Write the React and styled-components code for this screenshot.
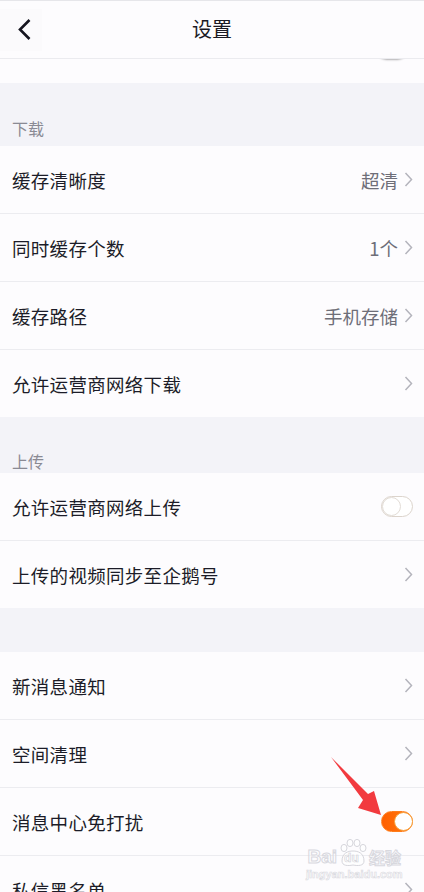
import React from "react";
import styled, { createGlobalStyle } from "styled-components";

const GlobalStyle = createGlobalStyle`
  html, body {
    margin: 0;
    padding: 0;
    background: #f3f3f8;
  }
  * {
    box-sizing: border-box;
  }
`;

const sections = [
  {
    title: "下载",
    height: 63,
    pad: 8,
    rows: [
      { label: "缓存清晰度", value: "超清", kind: "link" },
      { label: "同时缓存个数", value: "1个", kind: "link" },
      { label: "缓存路径", value: "手机存储", kind: "link" },
      { label: "允许运营商网络下载", kind: "link" },
    ],
  },
  {
    title: "上传",
    height: 56,
    pad: 2,
    rows: [
      { label: "允许运营商网络上传", kind: "off" },
      { label: "上传的视频同步至企鹅号", kind: "link" },
    ],
  },
  {
    title: "",
    height: 44,
    pad: 0,
    rows: [
      { label: "新消息通知", kind: "link" },
      { label: "空间清理", kind: "link" },
      { label: "消息中心免打扰", kind: "on" },
      { label: "私信黑名单", kind: "link" },
    ],
  },
];

const Chevron = () => (
  <svg width="9" height="15" viewBox="0 0 9 15">
    <polyline
      points="1.5,1 7.5,7.5 1.5,14"
      fill="none"
      stroke="#b4b4bc"
      strokeWidth="1.5"
    />
  </svg>
);

const App = () => {
  return (
    <>
      <GlobalStyle />
      <Page>
        <Header>
          <BackButton>
            <svg width="16" height="23" viewBox="0 0 16 23">
              <polyline
                points="12.5,2 3,11.5 12.5,21"
                fill="none"
                stroke="#15151f"
                strokeWidth="2.6"
              />
            </svg>
          </BackButton>
          <Title>设置</Title>
        </Header>

        <Strip>
          <Switch $on={false} $clipped />
        </Strip>

        {sections.map((section) => (
          <React.Fragment key={section.title + section.height}>
            <SectionHead $height={section.height} $pad={section.pad}>
              {section.title}
            </SectionHead>
            <Group>
              {section.rows.map((row) => (
                <Row key={row.label}>
                  <Label>{row.label}</Label>
                  <Right>
                    {row.value && <Value>{row.value}</Value>}
                    {row.kind === "link" && <Chevron />}
                    {row.kind === "off" && <Switch $on={false} />}
                    {row.kind === "on" && <Switch $on />}
                  </Right>
                </Row>
              ))}
            </Group>
          </React.Fragment>
        ))}

        <Pointer width="60" height="64" viewBox="0 0 60 64">
          <polygon
            points="3,2 40,39 46,36 53,60 30,53 35,45"
            fill="#f23a3f"
          />
        </Pointer>

        <Watermark>
          <MarkLine>
            <MarkWord>Bai</MarkWord>
            <Paw>
              <svg width="30" height="28" viewBox="0 0 30 28">
                <g fill="rgba(255,255,255,0.5)" stroke="#d6d6dc" strokeWidth="1">
                  <ellipse cx="6" cy="9" rx="3" ry="3.6" />
                  <ellipse cx="12" cy="4" rx="3" ry="3.6" />
                  <ellipse cx="19" cy="4" rx="3" ry="3.6" />
                  <ellipse cx="25" cy="9" rx="3" ry="3.6" />
                  <path d="M4,22 C4,14 10,12 15,12 C20,12 26,14 26,22 C26,27 20,27 15,26 C10,27 4,27 4,22 Z" />
                </g>
              </svg>
              <PawText>du</PawText>
            </Paw>
            <MarkWord $cjk>经验</MarkWord>
          </MarkLine>
          <MarkUrl>jingyan.baidu.com</MarkUrl>
        </Watermark>
      </Page>
    </>
  );
};

const Page = styled.div`
  position: relative;
  width: 424px;
  height: 892px;
  overflow: hidden;
  background: #f3f3f8;
  font-family: "Noto Sans CJK SC", "Noto Sans", sans-serif;
  border-top: 1px solid #e6e6ea;
`;

const Header = styled.div`
  position: relative;
  height: 58px;
  display: flex;
  align-items: center;
  justify-content: center;
  padding-bottom: 3px;
  background: #fdfcfe;
  border-bottom: 1px solid #ebebef;
  z-index: 2;
`;

const BackButton = styled.div`
  position: absolute;
  left: 0;
  top: 8px;
  width: 42px;
  height: 42px;
  display: flex;
  align-items: center;
  padding-left: 17px;
  padding-bottom: 2px;
  background: #fbfafc;
`;

const Title = styled.div`
  font-size: 20px;
  color: #1a1a24;
`;

const Strip = styled.div`
  height: 24px;
  background: #fdfcfe;
  display: flex;
  justify-content: flex-end;
  align-items: flex-start;
  padding-right: 16px;
  overflow: hidden;
`;

const SectionHead = styled.div`
  height: ${(p) => p.$height}px;
  display: flex;
  align-items: flex-end;
  padding: 0 12px ${(p) => p.$pad}px;
  font-size: 16px;
  line-height: 20px;
  color: #8a8a94;
`;

const Group = styled.div`
  background: #fdfcfe;
`;

const Row = styled.div`
  position: relative;
  height: 68px;
  display: flex;
  align-items: center;
  justify-content: space-between;
  padding: 0 11px 0 12px;

  & + & {
    border-top: 1px solid #ececf0;
  }
  &:first-child {
    height: 67px;
  }
`;

const Label = styled.div`
  font-size: 18.5px;
  color: #1c1c28;
  letter-spacing: 0.3px;
`;

const Right = styled.div`
  display: flex;
  align-items: center;
  gap: 6px;
`;

const Value = styled.div`
  font-size: 18.5px;
  color: #6e6e78;
`;

const Switch = styled.div`
  position: relative;
  width: 32px;
  height: 21px;
  border-radius: 11px;
  margin-top: ${(p) => (p.$clipped ? "-21px" : "0")};
  background: ${(p) =>
    p.$on ? "linear-gradient(90deg, #ff6000, #ff7a10)" : "#ffffff"};
  border: 1px solid ${(p) => (p.$on ? "#ff7d1a" : "#dcd4cc")};
  box-shadow: ${(p) => (p.$clipped ? "0 1px 2px rgba(0,0,0,0.3)" : "none")};

  &::after {
    content: "";
    position: absolute;
    top: 0;
    left: ${(p) => (p.$on ? "12px" : "0")};
    width: 19px;
    height: 19px;
    border-radius: 50%;
    background: #ffffff;
    border: 1px solid ${(p) => (p.$on ? "#f7a03a" : "#e2dcd6")};
    box-sizing: border-box;
  }
`;

const Pointer = styled.svg`
  position: absolute;
  left: 328px;
  top: 754px;
  z-index: 3;
`;

const Watermark = styled.div`
  position: absolute;
  left: 306px;
  top: 838px;
  display: flex;
  flex-direction: column;
  align-items: center;
  z-index: 3;
  pointer-events: none;
`;

const MarkLine = styled.div`
  display: flex;
  align-items: flex-end;
  gap: 1px;
`;

const MarkWord = styled.span`
  font-family: ${(p) =>
    p.$cjk ? '"Noto Sans CJK SC", sans-serif' : '"Liberation Sans", sans-serif'};
  font-weight: 700;
  font-size: ${(p) => (p.$cjk ? "16px" : "19px")};
  line-height: 20px;
  color: rgba(255, 255, 255, 0.4);
  -webkit-text-stroke: 1px #d8d8de;
`;

const Paw = styled.span`
  position: relative;
  width: 30px;
  height: 28px;
  display: inline-block;
`;

const PawText = styled.span`
  position: absolute;
  left: 6px;
  bottom: 2px;
  font-family: "Liberation Sans", sans-serif;
  font-weight: 700;
  font-size: 12px;
  color: rgba(255, 255, 255, 0.6);
  -webkit-text-stroke: 0.6px #d0d0d6;
`;

const MarkUrl = styled.div`
  font-family: "Liberation Sans", sans-serif;
  font-size: 11px;
  font-weight: 700;
  line-height: 12px;
  color: rgba(255, 255, 255, 0.4);
  -webkit-text-stroke: 0.6px #dadae0;
  margin-top: 1px;
`;

export default App;
